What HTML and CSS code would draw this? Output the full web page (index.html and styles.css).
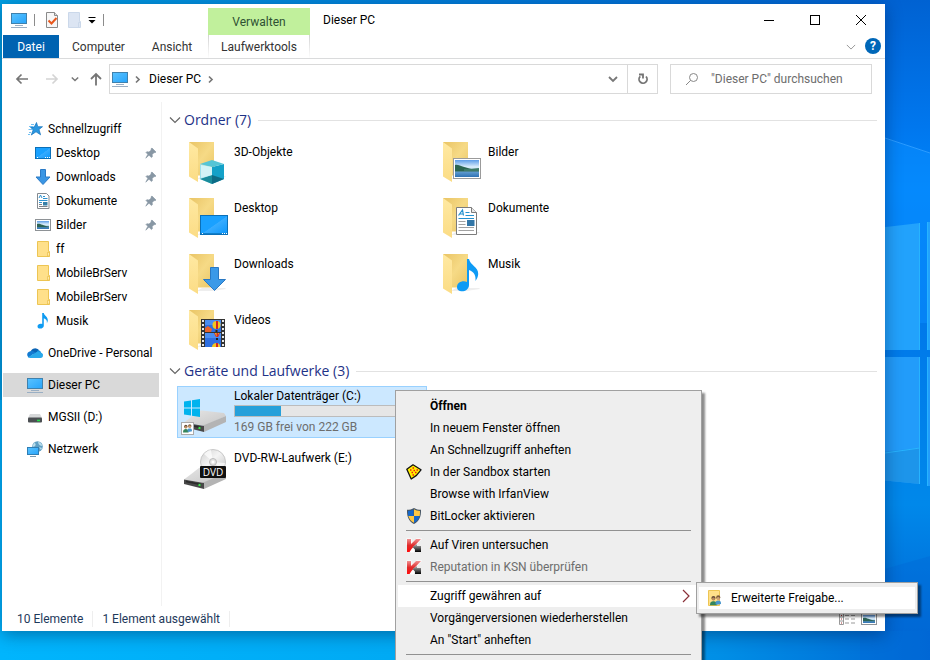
FILE: index.html
```html
<!DOCTYPE html>
<html lang="de">
<head>
<meta charset="utf-8">
<title>Dieser PC</title>
<link rel="stylesheet" href="styles.css">
</head>
<body>
<svg class="wallpaper" viewBox="0 0 930 660" preserveAspectRatio="xMaxYMid slice" aria-hidden="true">
  <defs>
    <linearGradient id="sky" x1="0" y1="0" x2="1" y2="0"><stop offset="0" stop-color="#009fe2"/><stop offset=".45" stop-color="#007fd9"/><stop offset="1" stop-color="#005fd0"/></linearGradient>
    <linearGradient id="floor" x1="0" y1="0" x2="1" y2="0"><stop offset="0" stop-color="#00b5fd"/><stop offset=".42" stop-color="#00aaf4"/><stop offset=".77" stop-color="#008fe6"/><stop offset="1" stop-color="#0067d4"/></linearGradient>
    <linearGradient id="edge" x1="0" y1="0" x2="0" y2="1"><stop offset="0" stop-color="#0062d2"/><stop offset=".2" stop-color="#0077ee"/><stop offset=".3" stop-color="#0085fa"/><stop offset=".5" stop-color="#0078ea"/><stop offset=".8" stop-color="#0088ea"/><stop offset="1" stop-color="#0068d4"/></linearGradient>
    <linearGradient id="f-back" x1="0" y1="0" x2="1" y2="1"><stop offset="0" stop-color="#e9c465"/><stop offset=".5" stop-color="#f6da86"/><stop offset="1" stop-color="#eac564"/></linearGradient>
    <linearGradient id="f-front" x1="0" y1="0" x2="0" y2="1"><stop offset="0" stop-color="#ffe9a2"/><stop offset="1" stop-color="#fbdc85"/></linearGradient>
    <linearGradient id="screen" x1="0" y1="0" x2="1" y2="1"><stop offset="0" stop-color="#5ac3ff"/><stop offset="1" stop-color="#27a4fb"/></linearGradient>
    <linearGradient id="desk" x1="0" y1="0" x2="1" y2="1"><stop offset="0" stop-color="#1aa1ff"/><stop offset=".5" stop-color="#1aa1ff"/><stop offset=".52" stop-color="#38acff"/><stop offset="1" stop-color="#0b96fb"/></linearGradient>
    <linearGradient id="photo" x1="0" y1="0" x2="0" y2="1"><stop offset="0" stop-color="#5b9ce8"/><stop offset=".4" stop-color="#d9ecfb"/><stop offset=".55" stop-color="#c8e2f5"/><stop offset=".7" stop-color="#5f9bd0"/><stop offset="1" stop-color="#2f72b4"/></linearGradient>
    <linearGradient id="metal" x1="0" y1="0" x2="1" y2="1"><stop offset="0" stop-color="#e6e6e6"/><stop offset="1" stop-color="#c6c6c6"/></linearGradient>
    <linearGradient id="disc" x1="0" y1="0" x2="1" y2="1"><stop offset="0" stop-color="#cfcfcf"/><stop offset=".45" stop-color="#f4f4f4"/><stop offset="1" stop-color="#c2c2c2"/></linearGradient>
    <linearGradient id="kasper" x1="0" y1="0" x2="0" y2="1"><stop offset="0" stop-color="#f09090"/><stop offset=".5" stop-color="#e02a2a"/><stop offset="1" stop-color="#ff0d0d"/></linearGradient>
    <linearGradient id="kbox" x1="0" y1="0" x2="0" y2="1"><stop offset="0" stop-color="#b5b5b5"/><stop offset="1" stop-color="#000"/></linearGradient>

    <symbol id="i-pc" viewBox="0 0 16 16"><rect x=".5" y="1.500" width="15" height="10" fill="url(#screen)" stroke="#3f81ad"/><path d="M4 13.500h8M0 15.500h16" stroke="#9aafc4"/></symbol>
    <symbol id="i-folder" viewBox="0 0 16 16"><path d="M2.500.5h11v10h1v5h-12z" fill="#ffe08a" stroke="#edc553"/><path d="M12.500 15v-3.500h2V15z" fill="#ffe9a8" stroke="#e9bd49" stroke-width=".7"/></symbol>
    <symbol id="i-desktop" viewBox="0 0 16 16"><rect x=".5" y="2.500" width="15" height="11" fill="url(#desk)" stroke="#0b70b8"/><path d="M2 12.500h1M10 12.500h1M12 12.500h1M14 12.500h1" stroke="#fff"/></symbol>
    <symbol id="i-down" viewBox="0 0 16 16"><path d="M5.500.5h5V8h4.500L8 15.500 1 8h4.500z" fill="#3a96e4" stroke="#2a7ac6"/></symbol>
    <symbol id="i-doc" viewBox="0 0 16 16"><path d="M2.500.5h9l2.500 2.500v12.500H2.500z" fill="#fff" stroke="#848a90"/><path d="M4 5l1.500-3L7 5M8 3.500h2M8 5.500h4.500M4 7.500h8.500M4 9.500h3" fill="none" stroke="#2e92cf"/><path d="M4 11.500h3M4 13.500h8.500" stroke="#7b8188"/><path d="M8 9h4.500v3.500H8z" fill="#357fa8"/></symbol>
    <symbol id="i-pic" viewBox="0 0 16 16"><rect x=".5" y="2.500" width="15" height="11" fill="#fff" stroke="#8e9296"/><path d="M2 4h12v8H2z" fill="url(#photo)"/><path d="M2 7c3-1 5 1.500 12 2.500v.7H2z" fill="#2d6355"/></symbol>
    <symbol id="i-music" viewBox="0 0 16 16"><path d="M7.200 0h1.600c.4 3 4.200 3.500 4 7.500-.1 1.300-.6 2-1 2.700.5-2.500-.5-4-3-5v7.600c0 3.500-6.300 3.800-6.300.6 0-2.200 2.700-3 4.700-2.300z" fill="#0e9bf2"/></symbol>
    <symbol id="i-quick" viewBox="0 0 16 16"><path d="M9.500 1.500l1.300 4.200h4.700L12 8.500l1.600 5.300L9 10.800 4.300 14l1.800-5L3.500 6h3.800z" fill="#2a97e0" stroke="#1673bb" stroke-width=".7"/><path d="M4 3.500h3M2 5.500H6M1.500 8.500h4M2 11.500H4M1 13.500h2" stroke="#62b9f0" stroke-width=".9"/></symbol>
    <symbol id="i-cloud" viewBox="0 0 16 16"><path d="M3.500 6.500A5 5 0 0 1 12 5.200l-4 5z" fill="#0a64b5"/><path d="M11 5.200c2 0 2.800 1 3 2.500L16 10l-8-.6z" fill="#1490df"/><path d="M3.500 6.200c2-.5 3.500.2 4.800 1.300L2 12.500C-.6 11.200-.6 6.700 3.500 6.200z" fill="#127ad1"/><path d="M1 12.200l7.300-4.400 2.600-1.200 3.400 1.200c2.500 1 2.200 5.200-.8 5.200H3.300C2.300 13 1.500 12.700 1 12.200z" fill="#29a8ea"/></symbol>
    <symbol id="i-drive" viewBox="0 0 16 16"><path d="M3 5h10l2 4H1z" fill="#d6d8d9"/><rect x="1" y="8.500" width="14" height="5" rx="1" fill="#4b4f52"/><path d="M10 11.500h3" stroke="#22e04a" stroke-width="1.500"/></symbol>
    <symbol id="i-net" viewBox="0 0 16 16"><circle cx="10.500" cy="5.500" r="5.300" fill="#5f9fc3"/><path d="M7 2c2 0 2 2 1 3S6 6 5.500 5zM11 1c2 0 4 2 4.500 4-2 0-4-1-4.500-4zM12 6l3 1-1 2z" fill="#b9dcea"/><rect x=".5" y="6.500" width="11" height="7" fill="url(#screen)" stroke="#2f7eb4"/><path d="M3 15.500h6" stroke="#7898ae"/></symbol>
    <symbol id="i-pin" viewBox="0 0 12 12"><path d="M7 1l4 4-1 .8-.8-.3-2 2 .2 2.200-1 .8L4 8.200.8 11.200l2-3.900L1 5.500l.8-.8L4 5l2.200-2L6 1.800z" fill="#8897a4" stroke="#8897a4" stroke-width=".6"/></symbol>
    <symbol id="i-people" viewBox="0 0 16 16"><circle cx="5" cy="4.500" r="3" fill="#664b37"/><circle cx="5" cy="5.800" r="2.200" fill="#bd8d60"/><path d="M0 15c0-5 2-6 5-6s5 1 5 6z" fill="#35865c"/><circle cx="12" cy="3.500" r="3" fill="#7b5b3c"/><circle cx="12" cy="5" r="2.200" fill="#d2a274"/><path d="M8 13c0-4 1-5 4-5s4 1 4 5l-6 1z" fill="#4896cd"/></symbol>
    <symbol id="i-kav" viewBox="0 0 16 16"><path d="M1 2h4v5l5.500-5H15L7.500 10v5H5L1 7z" fill="#fff" stroke="#fff" stroke-width="1.200"/><path d="M1 2h4v5l5-5h5L5.500 12 3.500 15H1z" fill="url(#kasper)"/><path d="M11 7v2h4v6H9v-2.500L6.500 10z" fill="url(#kbox)"/></symbol>
    <symbol id="i-sandbox" viewBox="0 0 16 16"><path d="M.8 5.300L7 .8l8 5-4.500 5.600L5.200 15z" fill="#ffef00" stroke="#111" stroke-width="1.300" stroke-linejoin="round"/><path d="M6.500 4H8M4 6h1.500M7.500 6.500H9M10.500 6H12M5.500 8.500H7M9 8.500h1.500M6.500 11H8" stroke="#ee1c12" stroke-width="1.400"/></symbol>
    <symbol id="i-shield" viewBox="0 0 16 16"><path d="M8 0c2 1.300 4.500 1.800 7 1.800C15.300 9 13 13.500 8 16 3 13.500.7 9 1 1.800 3.500 1.800 6 1.300 8 0z" fill="#485766"/><path d="M7.500 1.500V8H2.300C2 6.500 2 4.500 2 2.900c2-.1 4-.5 5.500-1.400zM8 8h5.700c-.8 3-2.500 5.200-5.700 6.700z" fill="#1668ca"/><path d="M8 1.300C9.700 2.400 12 2.800 14 2.900c0 1.600 0 3.600-.3 5.100H8zM2.300 8H8v6.700C5 13.200 3.200 11 2.300 8z" fill="#ffc843"/></symbol>
    <symbol id="i-chev" viewBox="0 0 12 12"><path d="M1 3.500l5 5 5-5" fill="none" stroke="currentColor" stroke-width="1.200"/></symbol>
    <symbol id="i-small-down" viewBox="0 0 10 10"><path d="M1 3l4 4 4-4" fill="none" stroke="currentColor" stroke-width="1.800"/></symbol>
    <symbol id="i-crumb" viewBox="0 0 10 10"><path d="M3 2.500l3 3-3 3" fill="none" stroke="currentColor" stroke-width="1.700"/></symbol>

    <symbol id="b-folder" viewBox="0 0 48 48"><path d="M20 38h23l1 1-14 2H15z" fill="#eeeeee"/><path d="M7 4h25v33.500H15z" fill="url(#f-back)"/><path d="M7 4l9 6.500V44l-9-5.500z" fill="url(#f-front)"/></symbol>
    <symbol id="b-drive" viewBox="0 0 48 48"><path d="M2 35.500L17 24q1-.7 3-.5L42 26l2 3-22 10z" fill="url(#metal)"/><path d="M20 39l24-10v6L22 45z" fill="#b4b4b4"/><path d="M2 35.500l20 3.500v6L2 40z" fill="#484848"/><path d="M4 37.500l15 3" stroke="#2b2b2b" stroke-width="1.500"/><path d="M16.500 40.800l2 .4" stroke="#3af04a" stroke-width="2"/></symbol>
  </defs>
  <rect width="930" height="660" fill="url(#sky)"/>
  <rect y="400" width="930" height="260" fill="url(#floor)"/>
  <rect x="884" width="46" height="631" fill="url(#edge)"/>
  <path d="M885 138l45 15v170h-45z" fill="#0a8dff" opacity=".5"/><path d="M885 138l45 15" stroke="#2a9bff" fill="none"/>
  <path d="M860 230l60-7v127h-60zM927 222h3v128h-3z" fill="#22a2fc"/>
  <path d="M860 357h60v127l-60-6zM927 357h3v129h-3z" fill="#229cfa"/>
  <path d="M860 454l60-6v36l-60-6z" fill="#1d95ea"/>
  <path d="M919.500 223v127M919.500 357v127M927.500 222v128M927.500 357v129M885 453l35-5" stroke="#27b4ff" fill="none"/>
  <path d="M860 576l70-20v104h-70z" fill="#0068d8" opacity=".4"/>
</svg>

<main class="window">
  <header class="titlebar">
    <div class="quick">
      <svg class="ic16"><use href="#i-pc"/></svg>
      <span class="bar"></span>
      <button class="plain" aria-label="Eigenschaften"><svg class="ic16" viewBox="0 0 16 16"><path d="M2.500.5h8l3 3v12h-11z" fill="#f7f7f7" stroke="#8a8a8a"/><path d="M10.500.5v3h3" fill="#ddd" stroke="#8a8a8a"/><path d="M4.500 8.500l3 3 5-5.500" fill="none" stroke="#e8571c" stroke-width="2"/></svg></button>
      <button class="plain" aria-label="Neuer Ordner"><svg class="ic16" viewBox="0 0 16 16"><path d="M2.500.5h11v9h1v6h-12z" fill="#dce5f3" stroke="#cbd8ea"/><path d="M12.500 15v-4.500h2" fill="none" stroke="#cbd8ea"/></svg></button>
      <button class="plain custom" aria-label="Symbolleiste anpassen"><svg class="ic8" viewBox="0 0 8 8"><path d="M.5 1.500h7" stroke="#000"/><path d="M.5 4h7L4 7.500z"/></svg></button>
      <span class="bar"></span>
    </div>
    <div class="context-title">Verwalten</div>
    <h1>Dieser PC</h1>
    <div class="controls">
      <button aria-label="Minimieren"><svg class="ic12" viewBox="0 0 12 12"><path d="M1 6.500h10" stroke="#000"/></svg></button>
      <button aria-label="Maximieren"><svg class="ic12" viewBox="0 0 12 12"><rect x="1.500" y="1.500" width="9" height="9" fill="none" stroke="#000"/></svg></button>
      <button aria-label="Schließen"><svg class="ic12" viewBox="0 0 12 12"><path d="M1 1l10 10M11 1L1 11" stroke="#000"/></svg></button>
    </div>
  </header>

  <nav class="ribbon" aria-label="Menüband">
    <button class="tab file">Datei</button>
    <button class="tab computer">Computer</button>
    <button class="tab view">Ansicht</button>
    <button class="tab tools">Laufwerktools</button>
    <button class="plain expand" aria-label="Menüband erweitern"><svg class="ic10"><use href="#i-chev"/></svg></button>
    <button class="help" aria-label="Hilfe">?</button>
  </nav>

  <div class="address-row">
    <div class="history">
      <button class="plain" aria-label="Zurück"><svg class="ic14" viewBox="0 0 14 14"><path d="M13 7H2M6.500 2.500L2 7l4.500 4.500" fill="none" stroke="#757575" stroke-width="1.700"/></svg></button>
      <button class="plain" aria-label="Vorwärts" disabled><svg class="ic14" viewBox="0 0 14 14"><path d="M1 7h11M7.500 2.500L12 7l-4.500 4.500" fill="none" stroke="#d4d4d4" stroke-width="1.700"/></svg></button>
      <button class="plain narrow" aria-label="Verlauf"><svg class="ic8"><use href="#i-small-down"/></svg></button>
      <button class="plain up" aria-label="Nach oben"><svg class="ic14" viewBox="0 0 14 14"><path d="M7 13.500V2M2 7l5-5 5 5" fill="none" stroke="#757575" stroke-width="1.800"/></svg></button>
    </div>
    <div class="address">
      <svg class="ic16"><use href="#i-pc"/></svg>
      <svg class="ic10 crumb"><use href="#i-crumb"/></svg>
      <a href="#">Dieser PC</a>
      <svg class="ic10 crumb"><use href="#i-crumb"/></svg>
      <button class="plain drop" aria-label="Zuletzt besucht"><svg class="ic10"><use href="#i-small-down"/></svg></button>
      <button class="plain refresh" aria-label="Aktualisieren"><svg class="ic12" viewBox="0 0 12 12"><path d="M3.300 3.300A4 4 0 1 0 9 3.500M2 1.500h4v4" fill="none" stroke="#747474" stroke-width="1.800"/></svg></button>
    </div>
    <label class="search">
      <svg class="ic14" viewBox="0 0 14 14"><circle cx="8.500" cy="5.500" r="4" fill="none" stroke="#888"/><path d="M5.700 8.300L1 13" stroke="#888"/></svg>
      <input type="search" aria-label="Suche" placeholder='"Dieser PC" durchsuchen'>
    </label>
  </div>

  <div class="panes">
    <nav class="tree" aria-label="Navigationsbereich">
      <ul>
        <li><a href="#"><svg class="ic16"><use href="#i-quick"/></svg>Schnellzugriff</a>
          <ul>
            <li><a href="#"><svg class="ic16"><use href="#i-desktop"/></svg>Desktop<svg class="pin"><use href="#i-pin"/></svg></a></li>
            <li><a href="#"><svg class="ic16"><use href="#i-down"/></svg>Downloads<svg class="pin"><use href="#i-pin"/></svg></a></li>
            <li><a href="#"><svg class="ic16"><use href="#i-doc"/></svg>Dokumente<svg class="pin"><use href="#i-pin"/></svg></a></li>
            <li><a href="#"><svg class="ic16"><use href="#i-pic"/></svg>Bilder<svg class="pin"><use href="#i-pin"/></svg></a></li>
            <li><a href="#"><svg class="ic16"><use href="#i-folder"/></svg>ff</a></li>
            <li><a href="#"><svg class="ic16"><use href="#i-folder"/></svg>MobileBrServ</a></li>
            <li><a href="#"><svg class="ic16"><use href="#i-folder"/></svg>MobileBrServ</a></li>
            <li><a href="#"><svg class="ic16"><use href="#i-music"/></svg>Musik</a></li>
          </ul>
        </li>
        <li><a href="#"><svg class="ic16"><use href="#i-cloud"/></svg>OneDrive - Personal</a></li>
        <li><a href="#" class="current"><svg class="ic16"><use href="#i-pc"/></svg>Dieser PC</a></li>
        <li><a href="#"><svg class="ic16"><use href="#i-drive"/></svg>MGSII (D:)</a></li>
        <li><a href="#"><svg class="ic16"><use href="#i-net"/></svg>Netzwerk</a></li>
      </ul>
    </nav>

    <section class="content">
      <h2><svg class="ic12"><use href="#i-chev"/></svg>Ordner (7)</h2>
      <div class="tiles">
        <a href="#" class="tile"><svg viewBox="0 0 48 48"><use href="#b-folder"/><path d="M18 26l12 3v17l-12-5z" fill="#9fe0ea"/><path d="M30 29l12-3v15l-12 5z" fill="#14a1c8"/><path d="M18 26l12-4 12 4-12 3z" fill="#55c5d6"/><path d="M18 41l12-4v9z" fill="#1a8c9c"/><path d="M30 37l12 4-12 5z" fill="#0e6c86"/><path d="M19 27l11 2v8l-11 3z" fill="#d3f3f6"/></svg><span>3D-Objekte</span></a>
        <a href="#" class="tile"><svg viewBox="0 0 48 48"><use href="#b-folder"/><rect x="17.500" y="20.500" width="27" height="20" fill="#fff" stroke="#9b9b9b"/><path d="M19 22h24v17H19z" fill="url(#photo)"/><path d="M19 27c5-1 9 4 24 5v1.500H19z" fill="#2b6551"/><path d="M28 31q8 0 15-1v3H28z" fill="#3d7a68"/></svg><span>Bilder</span></a>
        <a href="#" class="tile"><svg viewBox="0 0 48 48"><use href="#b-folder"/><rect x="18.500" y="21.500" width="27" height="19" fill="url(#desk)" stroke="#0b70b8"/><path d="M19 39.500h26" stroke="#0f80cc"/><path d="M20 39.500h1M40 39.500h1M42 39.500h1M44 39.500h1" stroke="#fff"/></svg><span>Desktop</span></a>
        <a href="#" class="tile"><svg viewBox="0 0 48 48"><use href="#b-folder"/><path d="M20.500 13.500h15l5 5v22h-20z" fill="#fff" stroke="#7c7c7c"/><path d="M35.500 13.500v5h5" fill="#e8e8e8" stroke="#7c7c7c"/><path d="M22.500 21.500l4-5.500 1 5.500M24 20h3.500M29.500 18.500h4M29.500 21.500h8.500M22.500 24.500H38" fill="none" stroke="#2492cf" stroke-width="1.200"/><path d="M22.500 27.500h7M22.500 30.500h7M22.500 33.500H38M22.500 36.500H38" stroke="#a2a2a2"/><path d="M31 26h7.500v6H31z" fill="#3377a8"/></svg><span>Dokumente</span></a>
        <a href="#" class="tile"><svg viewBox="0 0 48 48"><use href="#b-folder"/><path d="M28.500 17.500h8v12h7L32.500 40.500l-11-11h7z" fill="#3b99e8" stroke="#2a78c2"/></svg><span>Downloads</span></a>
        <a href="#" class="tile"><svg viewBox="0 0 48 48"><use href="#b-folder"/><path d="M31 9h2c1 6 9.500 8 9.200 15-.1 3-1.500 5-2.700 7 .5-6-1.500-9-6.500-11v15c0 7.500-12 8.500-12 2 0-5 6-7 10-5z" fill="#0e9bf5"/></svg><span>Musik</span></a>
        <a href="#" class="tile"><svg viewBox="0 0 48 48"><use href="#b-folder"/><path d="M19 13h24v28H19z" fill="#333"/><path d="M21 14v27M41 14v27" stroke="#e9e9e9" stroke-width="2" stroke-dasharray="2 2"/><path d="M23 14h16v12H23zM23 27h16v14H23z" fill="#2f6fe0"/><path d="M23 14h16v5H23zM23 27h16v5H23z" fill="#4a8df0"/><circle cx="34.500" cy="19" r="4" fill="#f4c51e"/><path d="M34 15h2v8h-2z" fill="#d32525"/><path d="M33.500 24h2v2h-2z" fill="#35250d"/><path d="M23 22l3-2 4 3-1 3h-6z" fill="#e8632a"/><path d="M32 27h6l-2 4h-2z" fill="#d32525"/><path d="M33 27h1.500v4zM36 27h1v2z" fill="#f4c51e"/><path d="M34 32h2v2h-2z" fill="#222"/><path d="M30 41c0-5 8-5 8-1v1z" fill="#f4c51e"/><path d="M34 37h2v4h-2z" fill="#d32525"/></svg><span>Videos</span></a>
      </div>
      <h2><svg class="ic12"><use href="#i-chev"/></svg>Geräte und Laufwerke (3)</h2>
      <div class="tiles">
        <a href="#" class="tile selected"><svg viewBox="0 0 48 48"><use href="#b-drive"/><path d="M2 14.500l7-1v7H2zM10 13.300l8-1.300v8.500h-8zM2 21.500h7v7l-7-1zM10 21.500h8V30l-8-1.200z" fill="#00b3ee"/><rect x="-.5" y="35.500" width="12" height="12" fill="#fff" stroke="#aaa"/><use href="#i-people" x="1" y="37" width="9" height="9"/></svg>
          <span class="drive"><span>Lokaler Datenträger (C:)</span><span class="usage"><span class="used" style="width:25%"></span></span><span class="free">169 GB frei von 222 GB</span></span></a>
        <a href="#" class="tile dvd"><svg viewBox="0 0 48 48"><use href="#b-drive"/><circle cx="31" cy="18" r="12.500" fill="url(#disc)" stroke="#c8c8c8"/><path d="M31 18l-9-8q4-4 7-4zM31 18l9 8q3-3 3-7z" fill="#fff" opacity=".7"/><circle cx="31" cy="18" r="3.500" fill="#e2e2e2" stroke="#bbb"/><circle cx="31" cy="18" r="1.500" fill="#fff"/><rect x="18" y="22" width="26" height="12" rx="1" fill="#111"/><text x="31" y="32" text-anchor="middle" class="dvd-label">DVD</text></svg><span>DVD-RW-Laufwerk (E:)</span></a>
      </div>
    </section>
  </div>

  <footer class="status">
    <span>10 Elemente</span><span>1 Element ausgewählt</span>
    <button class="plain" aria-label="Details"><svg class="ic16" viewBox="0 0 16 16"><path d="M.5 2.500h4v11h-4zM.5 6h4M.5 10h4" fill="#fff" stroke="#999"/><path d="M2 4.500h1M2 8h1M2 12h1" stroke="#a33"/><path d="M6 4.500h4M12 4.500h4M6 8h4M12 8h4M6 12h4M12 12h4" stroke="#999"/></svg></button>
    <button class="plain" aria-label="Große Symbole"><svg class="ic16"><use href="#i-pic"/></svg></button>
  </footer>
</main>

<div class="menu context" role="menu">
  <button role="menuitem" class="default"><i></i>Öffnen</button>
  <button role="menuitem"><i></i>In neuem Fenster öffnen</button>
  <button role="menuitem"><i></i>An Schnellzugriff anheften</button>
  <button role="menuitem"><svg class="ic16"><use href="#i-sandbox"/></svg>In der Sandbox starten</button>
  <button role="menuitem"><i></i>Browse with IrfanView</button>
  <button role="menuitem"><svg class="ic16"><use href="#i-shield"/></svg>BitLocker aktivieren</button>
  <hr>
  <button role="menuitem"><svg class="ic16"><use href="#i-kav"/></svg>Auf Viren untersuchen</button>
  <button role="menuitem" disabled><svg class="ic16"><use href="#i-kav"/></svg>Reputation in KSN überprüfen</button>
  <hr>
  <button role="menuitem" class="active"><i></i>Zugriff gewähren auf<svg class="more" viewBox="0 0 8 14"><path d="M1 1l6 6-6 6" fill="none" stroke="#8a3038" stroke-width="1.200"/></svg></button>
  <button role="menuitem"><i></i>Vorgängerversionen wiederherstellen</button>
  <button role="menuitem"><i></i>An "Start" anheften</button>
  <hr>
</div>

<div class="menu submenu" role="menu">
  <button role="menuitem" class="active"><svg class="ic16" viewBox="0 0 16 16"><path d="M1.500.5h11v15h-11z" fill="#ffe08a" stroke="#edc553"/><use href="#i-people" x="2" y="5" width="13" height="11"/></svg>Erweiterte Freigabe...</button>
</div>
</body>
</html>
```
FILE: styles.css
```css
* { box-sizing: border-box; }

body {
  margin: 0;
  height: 100vh;
  overflow: hidden;
  position: relative;
  display: flex;
  background: #0085dc;
  color: #000;
  font: 12px/16px Roboto, "Open Sans", sans-serif;
}

button, input { font: inherit; color: inherit; }
button { border: 0; padding: 0; background: none; }
a { color: inherit; text-decoration: none; }
ul { list-style: none; margin: 0; padding: 0; }
svg { flex: none; display: block; }

.wallpaper { position: absolute; inset: 0; width: 100%; height: 100%; }
.ic8 { width: 8px; height: 8px; }
.ic10 { width: 10px; height: 10px; }
.ic12 { width: 12px; height: 12px; }
.ic14 { width: 14px; height: 14px; }
.ic16 { width: 16px; height: 16px; }
.plain { display: flex; align-items: center; justify-content: center; }

.window {
  position: relative;
  flex: 1;
  min-width: 0;
  margin: 4px 45px 29px 2px;
  display: flex;
  flex-direction: column;
  background: #fff;
  box-shadow: 0 4px 16px rgba(0, 20, 60, .4);
}

/* title bar */
.titlebar { display: flex; height: 31px; padding-right: 1px; }
.quick { width: 206px; display: flex; align-items: center; gap: 7px; padding-left: 9px; }
.quick .bar { width: 1px; height: 12px; background: #8c8c8c; }
.quick .plain + .plain { margin-left: -1px; }
.quick .bar + .plain { margin-left: 2px; }
.context-title {
  width: 102px;
  margin-top: 4px;
  background: #c1f09c;
  color: #2f5233;
  text-align: center;
  line-height: 28px;
}
h1 { margin: 0 0 0 13px; font-size: 12px; font-weight: 400; line-height: 32px; }
.controls { margin-left: auto; display: flex; }
.controls button { width: 46px; display: flex; align-items: center; justify-content: center; }

/* ribbon tabs */
.ribbon {
  display: flex;
  align-items: stretch;
  height: 24px;
  padding: 0 4px 0 1px;
  border-bottom: 1px solid #dadbdc;
}
.tab { color: #333; }
.file { width: 56px; background: #0063b1; color: #fff; }
.computer { width: 79px; }
.view { width: 68px; }
.tools {
  width: 102px;
  margin-left: 2px;
  border: solid;
  border-width: 0 1px;
  border-image: linear-gradient(#d0d0d0, #fff) 1;
}
.expand { margin-left: auto; margin-right: 9px; color: #999; }
.help {
  width: 16px;
  height: 16px;
  margin-top: 3px;
  border-radius: 50%;
  background: #0067b8;
  color: #fff;
  font-weight: 700;
  line-height: 16px;
}

/* address row */
.address-row { display: flex; padding: 5px 13px 0 5px; height: 39px; }
.history { display: flex; height: 30px; color: #777; }
.history .plain { width: 30px; }
.history .narrow { width: 16px; }
.history .up { width: 26px; }
.address {
  flex: 1;
  display: flex;
  align-items: center;
  height: 30px;
  padding-left: 2px;
  border: 1px solid #d9d9d9;
  color: #777;
}
.address a { color: #000; }
.address .crumb { margin: 0 6px 0 5px; }
.address .drop { width: 28px; height: 28px; margin-left: auto; }
.address .refresh { width: 30px; height: 28px; border-left: 1px solid #d9d9d9; }
.search {
  width: 202px;
  height: 30px;
  margin-left: 12px;
  display: flex;
  align-items: center;
  gap: 12px;
  padding-left: 14px;
  border: 1px solid #d9d9d9;
}
.search input { flex: 1; min-width: 0; border: 0; padding: 0; background: none; outline: 0; }
.search input::placeholder { color: #6d6d6d; opacity: 1; }

/* navigation pane */
.panes { flex: 1; display: flex; min-height: 0; padding-top: 4px; }
.tree { width: 160px; padding: 15px 2px 0 1px; border-right: 1px solid #f2f2f2; }
.tree > ul { display: grid; grid-template-columns: minmax(0, 1fr); gap: 8px; }
.tree a {
  display: flex;
  align-items: center;
  gap: 5px;
  height: 24px;
  padding: 0 2px 0 24px;
  white-space: nowrap;
}
.tree ul ul a { padding-left: 32px; }
.tree .current { background: #d9d9d9; }
.pin { width: 12px; height: 12px; margin-left: auto; }

/* content */
.content { flex: 1; min-width: 0; padding: 8px 8px 0 7px; }
h2 {
  display: flex;
  align-items: center;
  gap: 3px;
  margin: 0 0 6px;
  height: 20px;
  color: #1e3287;
  font: 14px/20px "Open Sans", "Noto Sans", sans-serif;
}
h2 svg { color: #666; }
h2::after { content: ""; flex: 1; height: 1px; margin-left: 4px; background: #e2e2e2; }
.tiles {
  display: grid;
  grid-template-columns: repeat(auto-fill, 250px);
  gap: 4px;
  padding-left: 8px;
}
.tiles + h2 { margin: 5px 0; }
.tile {
  display: flex;
  gap: 4px;
  height: 52px;
  padding: 1px 6px 0 4px;
  border: 1px solid transparent;
  line-height: 28px;
}
.tile svg { width: 48px; height: 48px; overflow: visible; }
.selected { background: #cce8ff; border-color: #99d1ff; padding-top: 0; line-height: 18px; }
.drive { flex: 1; display: flex; flex-direction: column; }
.usage { height: 12px; border: 1px solid #bcbcbc; background: #e6e6e6; display: flex; }
.used { background: #26a0da; }
.free { color: #6d6d6d; line-height: 20px; }
.tile.dvd { grid-column: 1; }
.dvd-label { fill: #fff; font: 10px "Open Sans", sans-serif; }

/* status bar */
.status {
  display: flex;
  align-items: center;
  height: 25px;
  padding: 0 8px 0 15px;
  color: #1e395b;
}
.status span { padding-right: 9px; margin-right: 9px; border-right: 1px solid #eee; }
.status .plain { margin-left: 6px; }
.status span + .plain { margin-left: auto; }

/* context menus */
.menu {
  position: absolute;
  padding: 4px 2px;
  border: 1px solid #a0a0a0;
  background: #eee;
  box-shadow: 3px 3px 2px rgba(0, 0, 0, .45);
}
.context { left: 395px; top: 390px; width: 307px; }
.submenu { left: 696px; top: 582px; width: 222px; }
.menu button {
  display: flex;
  align-items: center;
  gap: 8px;
  width: 100%;
  height: 22px;
  padding: 0 9px 0 8px;
  white-space: nowrap;
}
.menu i { width: 16px; }
.menu .active { background: #fff; }
.menu .default { font-weight: 700; }
.menu button:disabled { color: #6d6d6d; }
.menu hr { margin: 3px 8px; border: 0; height: 1px; background: #919191; }
.more { width: 8px; height: 14px; margin-left: auto; }
```
